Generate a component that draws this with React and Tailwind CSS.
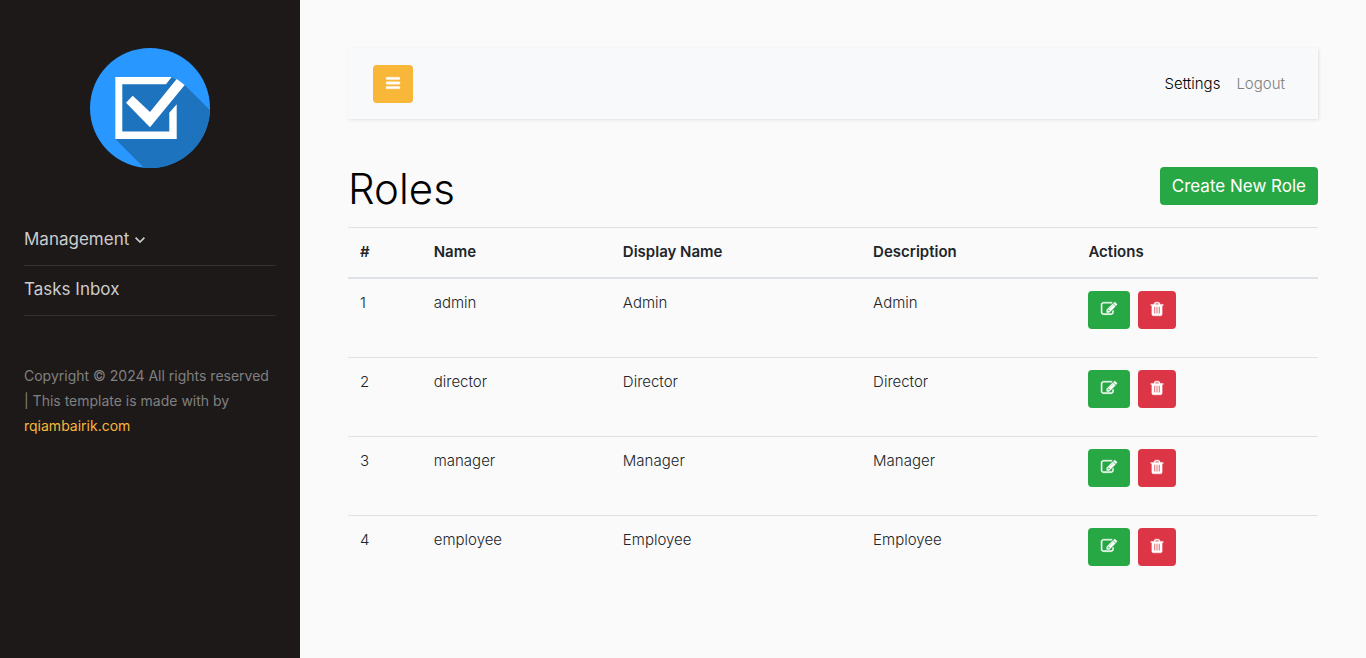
import React from "react";

const ICONS = {
  bars: "M1664 1344v128q0 26-19 45t-45 19h-1408q-26 0-45-19t-19-45v-128q0-26 19-45t45-19h1408q26 0 45 19t19 45zm0-512v128q0 26-19 45t-45 19h-1408q-26 0-45-19t-19-45v-128q0-26 19-45t45-19h1408q26 0 45 19t19 45zm0-512v128q0 26-19 45t-45 19h-1408q-26 0-45-19t-19-45v-128q0-26 19-45t45-19h1408q26 0 45 19t19 45z",
  edit: "M888 1184l116-116-152-152-116 116v56h96v96h56zm440-720q-16-16-33 1l-350 350q-17 17-1 33t33-1l350-350q17-17 1-33zm80 594v190q0 119-84.5 203.5t-203.5 84.5h-832q-119 0-203.5-84.5t-84.5-203.5v-832q0-119 84.5-203.5t203.5-84.5h832q63 0 117 25 15 7 18 23 3 17-9 29l-49 49q-14 14-32 8-23-6-45-6h-832q-66 0-113 47t-47 113v832q0 66 47 113t113 47h832q66 0 113-47t47-113v-126q0-13 9-22l64-64q15-15 35-7t20 29zm-96-738l288 288-672 672h-288v-288zm444 132l-92 92-288-288 92-92q28-28 68-28t68 28l152 152q28 28 28 68t-28 68z",
  trash: "M704 1376v-704q0-14-9-23t-23-9h-64q-14 0-23 9t-9 23v704q0 14 9 23t23 9h64q14 0 23-9t9-23zm256 0v-704q0-14-9-23t-23-9h-64q-14 0-23 9t-9 23v704q0 14 9 23t23 9h64q14 0 23-9t9-23zm256 0v-704q0-14-9-23t-23-9h-64q-14 0-23 9t-9 23v704q0 14 9 23t23 9h64q14 0 23-9t9-23zm-544-992h448l-48-117q-7-9-17-11h-317q-10 2-17 11zm928 32v64q0 14-9 23t-23 9h-96v948q0 83-47 143.5t-113 60.5h-832q-66 0-113-58.5t-47-141.5v-952h-96q-14 0-23-9t-9-23v-64q0-14 9-23t23-9h309l70-167q15-37 54-63t79-26h320q40 0 79 26t54 63l70 167h309q14 0 23 9t9 23z",
};

function Icon({ name }) {
  return (
    <svg
      className="size-4 shrink-0 overflow-visible"
      viewBox="0 0 1792 1792"
      fill="currentColor"
      stroke="currentColor"
      strokeWidth="45"
      aria-hidden="true"
    >
      <path d={ICONS[name]} />
    </svg>
  );
}

function Logo() {
  return (
    <svg className="size-[120px]" viewBox="0 0 120 120" aria-hidden="true">
      <clipPath id="disc">
        <circle cx="60" cy="60" r="60" />
      </clipPath>
      <g clipPath="url(#disc)">
        <rect width="120" height="120" fill="#2897ff" />
        <path d="M25.3 91V29H81.7L94.7 37L140 82V140H74.3Z" fill="#1e73be" />
      </g>
      <path d="M81.7 29H25.3V91H86.7V56.3L79.3 64.7V83.5H32.3V36.3H76Z" fill="#fff" />
      <path d="M36 54.7L42.7 47.7L60 64L86.7 31L94.7 37L60 79.3Z" fill="#fff" />
    </svg>
  );
}

const roles = [
  { id: 1, name: "admin", label: "Admin" },
  { id: 2, name: "director", label: "Director" },
  { id: 3, name: "manager", label: "Manager" },
  { id: 4, name: "employee", label: "Employee" },
];

function Sidebar() {
  return (
    <aside className="w-[300px] shrink-0 bg-[#1d1919] px-6 pt-12 text-[#cccccc]">
      <a href="#home" aria-label="Home" className="flex justify-center">
        <Logo />
      </a>
      <nav className="mt-12 text-[17px] leading-[29px]">
        <a href="#management" className="flex items-center gap-1.5 border-b border-white/10 pt-[9px] pb-[11px]">
          Management
          <svg className="mt-px w-[10px]" viewBox="0 0 10 6" fill="none" stroke="currentColor" strokeWidth="1.7" aria-hidden="true">
            <path d="M0.6 0.7L5 5L9.4 0.7" />
          </svg>
        </a>
        <a href="#tasks" className="block border-b border-white/10 pt-[9px] pb-[11px]">Tasks Inbox</a>
      </nav>
      <p className="mt-[47px] text-sm leading-[25px] text-[#808080]">
        Copyright © 2024 All rights reserved | This template is made with by{" "}
        <a href="#author" className="text-[#f8b739]">rqiambairik.com</a>
      </p>
    </aside>
  );
}

export default function App() {
  return (
    <div className="flex min-h-screen bg-[#fafafa] font-['Inter',sans-serif] text-[15px] leading-[25px] text-[#212529]">
      <Sidebar />
      <main className="min-w-0 flex-1 p-12">
        <header className="flex items-center justify-between bg-[#f8f9fa] px-[25px] pt-[17px] pb-4 shadow-[1px_1px_3px_rgba(0,0,0,0.1)]">
          <button type="button" aria-label="Toggle menu" className="flex h-[38px] w-10 items-center justify-center rounded bg-[#f8b739] pb-0.5 text-white">
            <Icon name="bars" />
          </button>
          <nav className="flex gap-4 px-2 pb-0.5 font-light">
            <a href="#settings" className="text-black">Settings</a>
            <a href="#logout" className="text-[#808080]">Logout</a>
          </nav>
        </header>

        <div className="mt-12 flex items-start justify-between">
          <h1 className="text-[42px] leading-[44px] font-light text-black">Roles</h1>
          <button type="button" className="h-[38px] rounded bg-[#28a745] px-3 text-[17px] text-white">
            Create New Role
          </button>
        </div>

        <table className="mt-4 w-full table-fixed border-t border-[#dee2e6] text-left">
          <thead>
            <tr className="border-b-2 border-[#dee2e6]">
              <th scope="col" className="w-[7.6%] px-3 pt-[11px] pb-[13px] font-semibold">#</th>
              <th scope="col" className="w-[19.5%] px-3 pt-[11px] pb-[13px] font-semibold">Name</th>
              <th scope="col" className="w-[25.8%] px-3 pt-[11px] pb-[13px] font-semibold">Display Name</th>
              <th scope="col" className="w-[22.2%] px-3 pt-[11px] pb-[13px] font-semibold">Description</th>
              <th scope="col" className="px-3 pt-[11px] pb-[13px] font-semibold">Actions</th>
            </tr>
          </thead>
          <tbody className="divide-y divide-[#dee2e6] font-light">
            {roles.map((role) => (
              <tr key={role.id} className="align-top">
                <td className="px-3 pt-[11px]">{role.id}</td>
                <td className="px-3 pt-[11px]">{role.name}</td>
                <td className="px-3 pt-[11px]">{role.label}</td>
                <td className="px-3 pt-[11px]">{role.label}</td>
                <td className="p-3">
                  <div className="mb-4 flex gap-2">
                    <button type="button" aria-label={`Edit ${role.name}`} className="flex h-[38px] w-[42px] items-center justify-center rounded bg-[#28a745] pb-0.5 text-white">
                      <Icon name="edit" />
                    </button>
                    <button type="button" aria-label={`Delete ${role.name}`} className="flex h-[38px] w-[38px] items-center justify-center rounded bg-[#dc3545] pb-0.5 text-white">
                      <Icon name="trash" />
                    </button>
                  </div>
                </td>
              </tr>
            ))}
          </tbody>
        </table>
      </main>
    </div>
  );
}
